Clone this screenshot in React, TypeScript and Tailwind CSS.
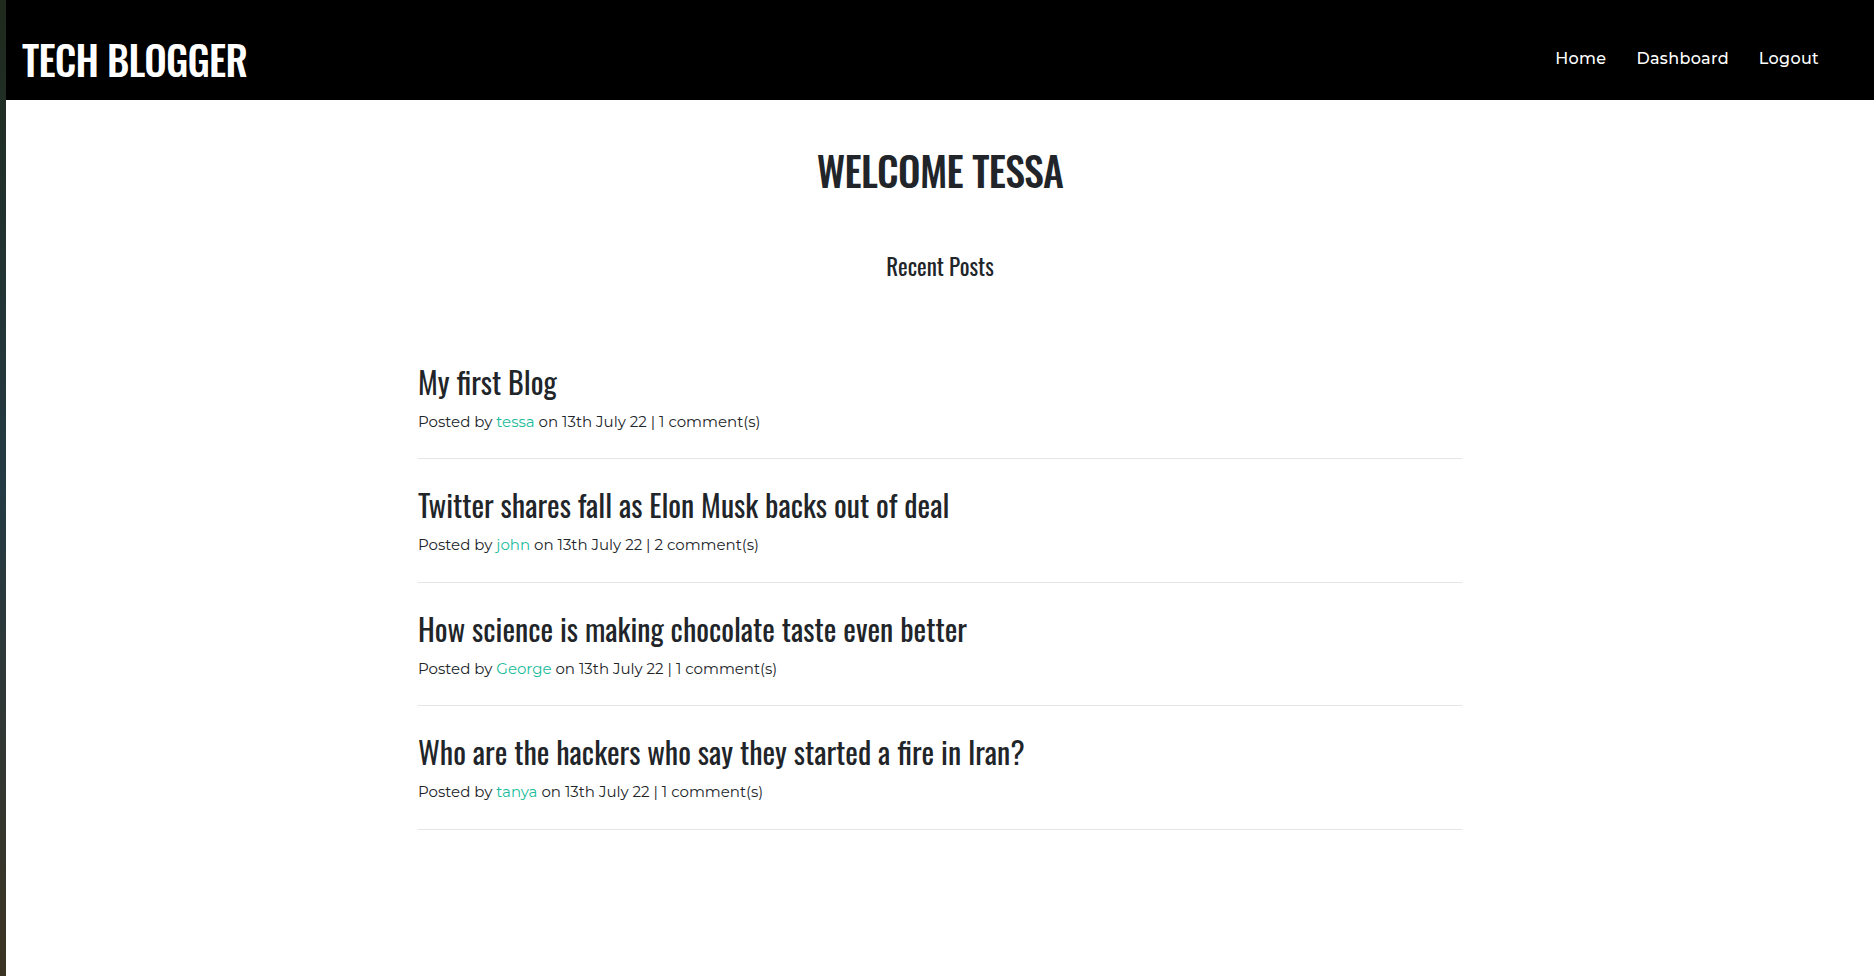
const posts = [
  { id: 1, title: "My first Blog", author: "tessa", date: "13th July 22", comments: 1 },
  { id: 2, title: "Twitter shares fall as Elon Musk backs out of deal", author: "john", date: "13th July 22", comments: 2 },
  { id: 3, title: "How science is making chocolate taste even better", author: "George", date: "13th July 22", comments: 1 },
  { id: 4, title: "Who are the hackers who say they started a fire in Iran?", author: "tanya", date: "13th July 22", comments: 1 },
];

const heading = "font-['Oswald','Liberation_Sans_Narrow','DejaVu_Sans_Condensed',sans-serif]";
const body = "font-['Montserrat','Open_Sans',sans-serif]";

export default function App() {
  return (
    <div className="flex min-h-screen bg-white">
      {/* desktop wallpaper peeking in on the left */}
      <div className="w-[6px] shrink-0 bg-gradient-to-b from-[#1f2a1c] via-[#243a44] to-[#3b3322]" />

      <div className="flex-1">
        <header className="flex h-[100px] items-center justify-between bg-black pl-4 pr-10 pt-[18px]">
          <a href="#" className={`${heading} text-[40px] font-medium leading-none tracking-[-0.02em] text-white`}>
            TECH BLOGGER
          </a>
          <nav className={`${body} flex text-[16px] font-medium tracking-[0.02em] text-white`}>
            <a href="#" className="px-[15px]">Home</a>
            <a href="#" className="px-[15px]">Dashboard</a>
            <a href="#" className="px-[15px]">Logout</a>
          </nav>
        </header>

        <main className="mx-auto w-[1044px] pt-[46px]">
          <h1 className={`${heading} text-center text-[40px] font-medium leading-[1.2] tracking-[-0.015em] text-[#212529]`}>
            WELCOME TESSA
          </h1>
          <h2 className={`${heading} mt-[59px] text-center text-[23px] leading-[1.2] text-[#212529]`}>
            Recent Posts
          </h2>

          <div className="mt-[55px] flex flex-col">
            {posts.map((post) => (
              <article key={post.id} className="border-b border-[#e5e5e5] pb-[25px] pt-[28px]">
                <h3 className={`${heading} text-[30px] leading-[1.2] text-[#212529]`}>{post.title}</h3>
                <p className={`${body} mt-[11px] text-[15px] leading-[1.5] text-[#212529]`}>
                  Posted by <a href="#" className="text-[#1abc9c]">{post.author}</a> on {post.date} | {post.comments} comment(s)
                </p>
              </article>
            ))}
          </div>
        </main>
      </div>
    </div>
  );
}
